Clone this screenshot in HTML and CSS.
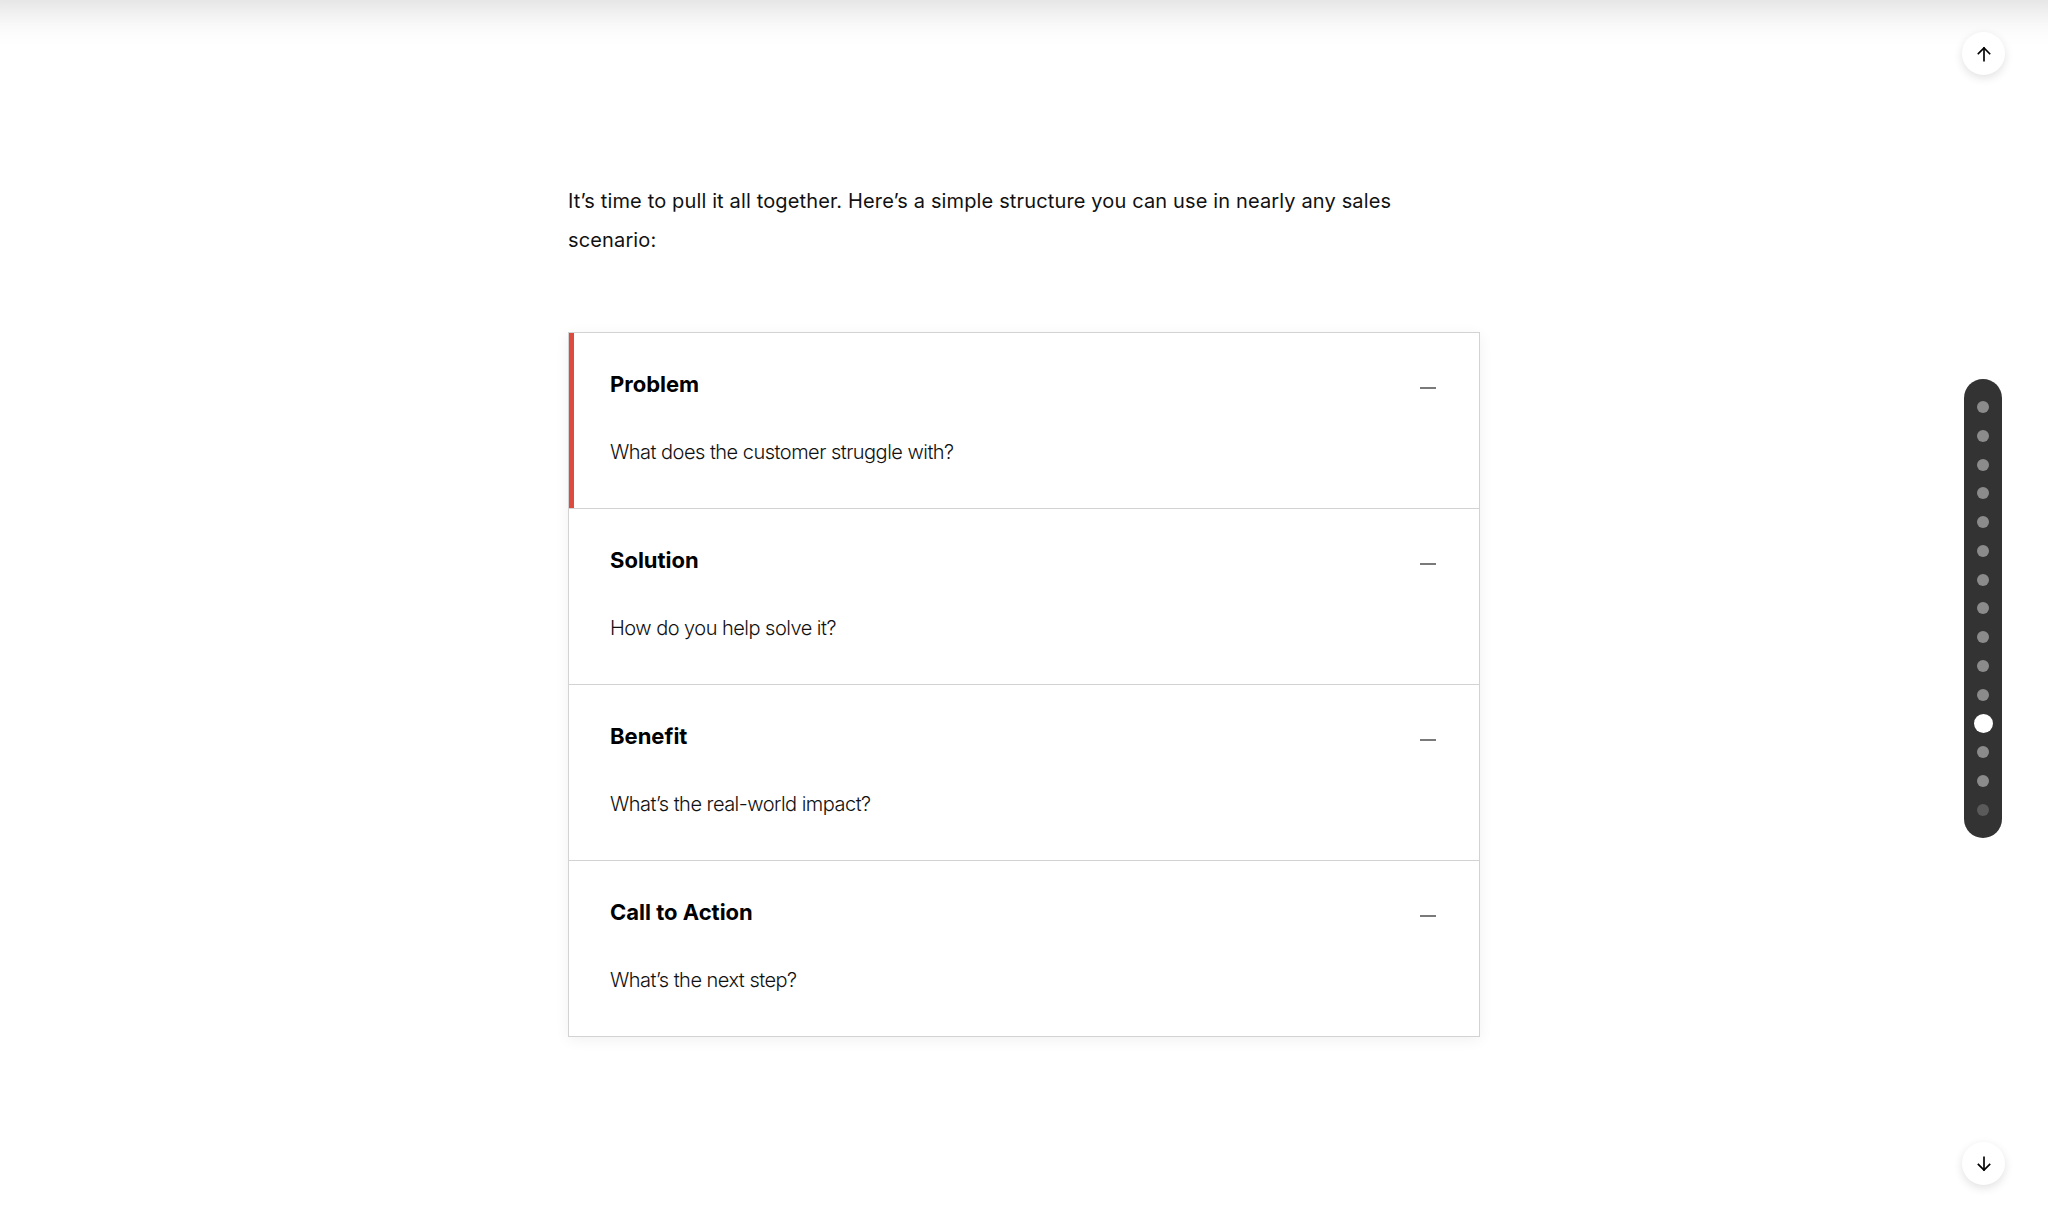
FILE: index.html
```html
<!DOCTYPE html>
<html lang="en">
<head>
<meta charset="utf-8">
<title>Sales structure</title>
<link rel="stylesheet" href="styles.css">
</head>
<body>
<div class="top-shade"></div>
<main class="page">
  <p class="intro">It’s time to pull it all together. Here’s a simple structure you can use in nearly any sales scenario:</p>
  <section class="accordion">
    <div class="item active">
      <div class="item-head"><h3 class="item-title">Problem</h3><span class="minus"></span></div>
      <p class="item-body">What does the customer struggle with?</p>
    </div>
    <div class="item">
      <div class="item-head"><h3 class="item-title">Solution</h3><span class="minus"></span></div>
      <p class="item-body">How do you help solve it?</p>
    </div>
    <div class="item">
      <div class="item-head"><h3 class="item-title">Benefit</h3><span class="minus"></span></div>
      <p class="item-body">What’s the real-world impact?</p>
    </div>
    <div class="item">
      <div class="item-head"><h3 class="item-title">Call to Action</h3><span class="minus"></span></div>
      <p class="item-body">What’s the next step?</p>
    </div>
  </section>
</main>

<button class="nav-btn up" aria-label="Previous">
  <svg width="18" height="18" viewBox="0 0 24 24" fill="none" stroke="#000" stroke-width="2.2" stroke-linecap="square"><path d="M12 21V4"/><path d="M4.5 11.5L12 4l7.5 7.5"/></svg>
</button>
<nav class="dots">
  <span class="dot"></span><span class="dot"></span><span class="dot"></span><span class="dot"></span><span class="dot"></span>
  <span class="dot"></span><span class="dot"></span><span class="dot"></span><span class="dot"></span><span class="dot"></span>
  <span class="dot"></span><span class="dot current"></span><span class="dot"></span><span class="dot"></span><span class="dot dim"></span>
</nav>
<button class="nav-btn down" aria-label="Next">
  <svg width="18" height="18" viewBox="0 0 24 24" fill="none" stroke="#000" stroke-width="2.2" stroke-linecap="square"><path d="M12 3v17"/><path d="M4.5 12.5L12 20l7.5-7.5"/></svg>
</button>
</body>
</html>
```
FILE: styles.css
```css
* { box-sizing: border-box; }
html, body { margin: 0; padding: 0; background: #fff; }
body {
  font-family: Inter, "Noto Sans", "Liberation Sans", sans-serif;
  color: #111;
  height: 1219px;
  overflow: hidden;
}
.top-shade {
  position: fixed;
  left: -40px; right: -40px; top: -40px;
  height: 40px;
  box-shadow: 0 0 40px 6px rgba(0,0,0,0.16);
}
.page {
  width: 912px;
  margin: 0 auto;
  padding-top: 182px;
}
.intro {
  margin: 0;
  width: 880px;
  font-size: 20px;
  line-height: 39px;
  letter-spacing: 0.14px;
  color: #111;
  font-weight: 400;
}
.accordion {
  margin-top: 72px;
  border: 1px solid #d3d3d3;
  background: #fff;
  box-shadow: 0 3px 14px rgba(0,0,0,0.06);
}
.item {
  padding: 36px 43px 41px 41px;
  border-bottom: 1px solid #d3d3d3;
}
.item:last-child { border-bottom: none; padding-bottom: 41px; }
.item.active { box-shadow: inset 5px 0 0 #dc4b3e; }
.item-head {
  display: flex;
  justify-content: space-between;
  align-items: center;
  height: 30px;
}
.item-title {
  margin: 0;
  font-size: 22px;
  font-weight: 700;
  line-height: 30px;
  color: #000;
}
.minus {
  width: 16px;
  height: 2px;
  background: #7a7a7a;
  margin-top: 8px;
}
.item-body {
  margin: 38px 0 0;
  font-size: 20px;
  line-height: 30px;
  font-weight: 300;
  letter-spacing: -0.52px;
  color: #111;
}
.nav-btn {
  position: fixed;
  left: 1962px;
  width: 43px;
  height: 43px;
  border: none;
  border-radius: 50%;
  background: #fff;
  box-shadow: 0 3px 10px rgba(0,0,0,0.12);
  display: flex;
  align-items: center;
  justify-content: center;
  padding: 0;
}
.nav-btn.up { top: 32px; }
.nav-btn.down { top: 1142px; }
.dots {
  position: fixed;
  left: 1964px;
  top: 379px;
  width: 38px;
  height: 459px;
  background: #333;
  border-radius: 19px;
  display: flex;
  flex-direction: column;
  align-items: center;
  justify-content: space-between;
  padding: 22px 0;
}
.dot {
  width: 12px;
  height: 12px;
  border-radius: 50%;
  background: #8b8b8b;
}
.dot.current { width: 19px; height: 19px; background: #fff; margin: -3.5px 0; }
.dot.dim { background: #5a5a5a; }
```
